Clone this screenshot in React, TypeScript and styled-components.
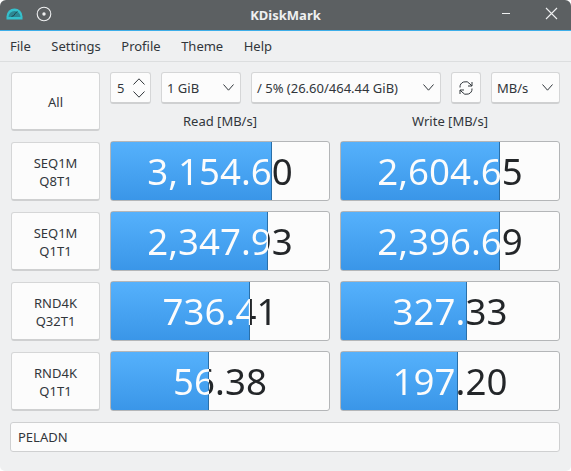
import { Fragment } from "react";
import styled, { createGlobalStyle } from "styled-components";

const GlobalStyle = createGlobalStyle`
  html, body {
    margin: 0;
    padding: 0;
    background: #ffffff;
  }
  body {
    font-family: "Noto Sans", sans-serif;
    color: #232629;
  }
`;

const Window = styled.div`
  width: 571px;
  height: 471px;
  background: #eff0f1;
  border-radius: 6px 6px 5px 5px;
  overflow: hidden;
  display: flex;
  flex-direction: column;
`;

const TitleBar = styled.div`
  height: 30px;
  flex: none;
  background: #5c6062;
  border-bottom: 1px solid #3daee9;
  display: grid;
  grid-template-columns: 1fr auto 1fr;
  align-items: center;
`;

const TitleIcons = styled.div`
  display: flex;
  align-items: center;
  gap: 13px;
  padding: 0 0 3px 6px;
`;

const TitleText = styled.div`
  font-size: 13px;
  font-weight: 700;
  color: #eff0f1;
`;

const WindowButtons = styled.div`
  display: flex;
  justify-content: flex-end;
  align-items: center;
  gap: 35px;
  padding: 0 13px 3px 0;
`;

const MenuBar = styled.div`
  height: 30px;
  flex: none;
  border-bottom: 1px solid #dcdedf;
  display: flex;
  align-items: center;
  padding-left: 10px;
  gap: 20.5px;
  font-size: 13px;
  color: #31363b;
`;

const Content = styled.div`
  padding: 9px 11px 0 11px;
  display: grid;
  grid-template-columns: 89px 220px 220px;
  grid-auto-rows: 60px;
  gap: 10px;
`;

const Side = styled.button`
  all: unset;
  box-sizing: border-box;
  height: 59px;
  margin-top: 1px;
  padding-top: 1px;
  background: #fcfcfc;
  border: 1px solid #d5d6d7;
  border-bottom: 2px solid #cfd0d1;
  border-radius: 3px;
  display: flex;
  align-items: center;
  justify-content: center;
  text-align: center;
  font-size: 13px;
  line-height: 18px;
  color: #31363b;
`;

const Controls = styled.div`
  grid-column: 2 / 4;
  display: flex;
  flex-direction: column;
  padding-top: 1px;
`;

const Toolbar = styled.div`
  display: flex;
  gap: 10px;
  height: 32px;
`;

const Field = styled.div<{ $w: number }>`
  box-sizing: border-box;
  width: ${(p) => p.$w}px;
  height: 32px;
  background: #fcfcfc;
  border: 1px solid #d5d6d7;
  border-bottom: 2px solid #cfd0d1;
  border-radius: 3px;
  display: flex;
  align-items: center;
  justify-content: space-between;
  padding: 0 6px 0 5px;
  font-size: 13px;
  color: #31363b;
  white-space: nowrap;
`;

const SpinField = styled(Field)`
  padding: 0 5px 0 6px;
`;

const IconField = styled(Field)`
  justify-content: center;
  padding: 0;
`;

const SpinArrows = styled.div`
  display: flex;
  flex-direction: column;
  gap: 6px;
`;

const Headers = styled.div`
  display: grid;
  grid-template-columns: 1fr 1fr;
  column-gap: 10px;
  margin-top: 8px;
  font-size: 13px;
  line-height: 18px;
  text-align: center;
  color: #31363b;
`;

const Bar = styled.div`
  position: relative;
  box-sizing: border-box;
  height: 60px;
  background: #fcfcfc;
  border: 1px solid #b4b6b8;
  border-radius: 3px;
  overflow: hidden;
  display: flex;
  align-items: center;
`;

const Fill = styled.div`
  position: absolute;
  top: -1px;
  bottom: -1px;
  left: -1px;
  box-sizing: border-box;
  background: linear-gradient(#55b1fc, #3a96e8);
  border: 1px solid #2a6fa8;
  border-radius: 3px 0 0 3px;
`;

/* one text, painted white over the filled part of the bar and dark past it */
const Value = styled.span`
  position: relative;
  width: 100%;
  font-size: 36.7px;
  line-height: 1.2;
  text-align: center;
  white-space: nowrap;
  color: transparent;
  -webkit-background-clip: text;
  background-clip: text;
`;

const Profile = styled.div`
  box-sizing: border-box;
  margin: 11px 11px 0 10px;
  height: 30px;
  background: #fcfcfc;
  border: 1px solid #cfd0d1;
  border-radius: 3px;
  display: flex;
  align-items: center;
  padding-left: 7px;
  font-size: 13px;
  color: #31363b;
`;

const rows = [
  { a: "SEQ1M", b: "Q8T1", read: "3,154.60", readFill: 162, write: "2,604.65", writeFill: 160 },
  { a: "SEQ1M", b: "Q1T1", read: "2,347.93", readFill: 158, write: "2,396.69", writeFill: 160 },
  { a: "RND4K", b: "Q32T1", read: "736.41", readFill: 140, write: "327.33", writeFill: 127 },
  { a: "RND4K", b: "Q1T1", read: "56.38", readFill: 99, write: "197.20", writeFill: 118 },
];

function Chevron({ up, size = 11 }: { up?: boolean; size?: number }) {
  const h = Math.ceil(size / 2) + 1;
  return (
    <svg width={size} height={h} viewBox={`0 0 ${size} ${h}`} fill="none" stroke="#31363b" strokeWidth="1">
      <path
        d={
          up
            ? `M0.5 ${h - 0.5} L${size / 2} 0.8 L${size - 0.5} ${h - 0.5}`
            : `M0.5 0.5 L${size / 2} ${h - 0.8} L${size - 0.5} 0.5`
        }
      />
    </svg>
  );
}

function Result({ value, fill }: { value: string; fill: number }) {
  const edge = fill - 1;
  return (
    <Bar>
      <Fill style={{ width: fill }} />
      <Value style={{ backgroundImage: `linear-gradient(to right, #fcfcfc ${edge}px, #232629 ${edge}px)` }}>
        {value}
      </Value>
    </Bar>
  );
}

export default function App() {
  return (
    <>
      <GlobalStyle />
      <Window>
        <TitleBar>
          <TitleIcons>
            <svg width="17" height="13" viewBox="0 0 17 13">
              <path d="M0.5 12.5 V9.5 A8 8 0 0 1 16.5 9.5 V12.5 Z" fill="#35c0cc" />
              <path d="M2.5 10 A6 6 0 0 1 14.5 10 Z" fill="#2c8794" />
              <path d="M5.5 9.5 L8 8.5 L9 6.5 L11.5 4.5" stroke="#1f4a52" strokeWidth="1" fill="none" />
            </svg>
            <svg width="16" height="16" viewBox="0 0 16 16" fill="none">
              <circle cx="8" cy="8" r="6.8" stroke="#eff0f1" strokeWidth="1.1" />
              <circle cx="8" cy="8" r="1.7" fill="#eff0f1" />
            </svg>
          </TitleIcons>
          <TitleText>KDiskMark</TitleText>
          <WindowButtons>
            <svg width="8" height="3" viewBox="0 0 8 3">
              <rect x="0" y="1" width="8" height="1" fill="#eff0f1" />
            </svg>
            <svg width="13" height="13" viewBox="0 0 13 13" stroke="#eff0f1" strokeWidth="1.1">
              <path d="M1 1 L12 12 M12 1 L1 12" />
            </svg>
          </WindowButtons>
        </TitleBar>
        <MenuBar>
          <span>File</span>
          <span>Settings</span>
          <span>Profile</span>
          <span>Theme</span>
          <span>Help</span>
        </MenuBar>
        <Content>
          <Side>All</Side>
          <Controls>
            <Toolbar>
              <SpinField $w={41}>
                5
                <SpinArrows>
                  <Chevron up size={12} />
                  <Chevron size={12} />
                </SpinArrows>
              </SpinField>
              <Field $w={80}>
                1 GiB
                <Chevron />
              </Field>
              <Field $w={190}>
                / 5% (26.60/464.44 GiB)
                <Chevron />
              </Field>
              <IconField $w={30}>
                <svg width="14" height="14" viewBox="0 0 14 14" fill="none" stroke="#31363b" strokeWidth="1">
                  <path d="M1 6.5 A5.5 5.5 0 0 1 11 3 L13 5 M13 1 V5 H9" />
                  <path d="M13 7.5 A5.5 5.5 0 0 1 3 11 L1 9 M1 13 V9 H5" />
                </svg>
              </IconField>
              <Field $w={69}>
                MB/s
                <Chevron />
              </Field>
            </Toolbar>
            <Headers>
              <span>Read [MB/s]</span>
              <span>Write [MB/s]</span>
            </Headers>
          </Controls>
          {rows.map((r) => (
            <Fragment key={r.a + r.b}>
              <Side>
                {r.a}
                <br />
                {r.b}
              </Side>
              <Result value={r.read} fill={r.readFill} />
              <Result value={r.write} fill={r.writeFill} />
            </Fragment>
          ))}
        </Content>
        <Profile>PELADN</Profile>
      </Window>
    </>
  );
}
